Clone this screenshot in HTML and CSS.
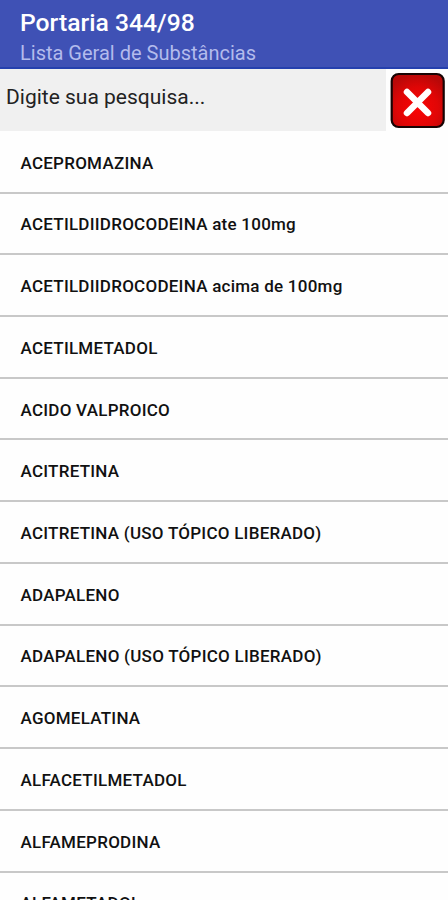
FILE: index.html
```html
<!DOCTYPE html>
<html lang="pt-BR">
<head>
  <meta charset="UTF-8" />
  <meta name="viewport" content="width=device-width, initial-scale=1.0"/>
  <title>Portaria 344/98</title>
  <link rel="stylesheet" href="styles.css">
</head>
<body>
  <header class="app-bar">
    <h1>Portaria 344/98</h1>
    <p>Lista Geral de Substâncias</p>
  </header>

  <div class="search">
    <div class="search-input">Digite sua pesquisa...</div>
    <button class="clear-button" aria-label="Limpar">
      <svg width="56" height="57" viewBox="0 0 56 57">
        <defs>
          <radialGradient id="red" cx="50%" cy="65%" r="65%">
            <stop offset="0" stop-color="#fa0505"/>
            <stop offset="0.6" stop-color="#e00606"/>
            <stop offset="1" stop-color="#b90808"/>
          </radialGradient>
        </defs>
        <rect x="1.7" y="2" width="52" height="53" rx="7" fill="url(#red)" stroke="#180404" stroke-width="2.2"/>
        <path d="M17 20L38 41M38 20L17 41" stroke="#fff" stroke-width="6.500" stroke-linecap="round"/>
      </svg>
    </button>
  </div>

  <ul class="list">
    <li>ACEPROMAZINA</li>
    <li>ACETILDIIDROCODEINA ate 100mg</li>
    <li>ACETILDIIDROCODEINA acima de 100mg</li>
    <li>ACETILMETADOL</li>
    <li>ACIDO VALPROICO</li>
    <li>ACITRETINA</li>
    <li>ACITRETINA (USO TÓPICO LIBERADO)</li>
    <li>ADAPALENO</li>
    <li>ADAPALENO (USO TÓPICO LIBERADO)</li>
    <li>AGOMELATINA</li>
    <li>ALFACETILMETADOL</li>
    <li>ALFAMEPRODINA</li>
    <li>ALFAMETADOL</li>
  </ul>
</body>
</html>
```
FILE: styles.css
```css
* {
  box-sizing: border-box;
}

body {
  font-family: Roboto, "Liberation Sans", sans-serif;
  margin: 0;
  height: 100vh;
  display: flex;
  flex-direction: column;
  overflow: hidden;
  background-color: #fefefe;
  color: #111;
}

.app-bar {
  flex: none;
  height: 69px;
  padding: 8px 20px 0;
  background-color: #3f51b5;
  border-bottom: 2px solid #2540ae;
}

.app-bar h1 {
  margin: 0;
  font-size: 24.7px;
  line-height: 30px;
  font-weight: 500;
  color: #fff;
}

.app-bar p {
  margin: 3px 0 0;
  font-size: 20px;
  line-height: 24px;
  color: #b3bbec;
}

.search {
  flex: none;
  display: flex;
  height: 62px;
}

.search-input {
  width: 386px;
  padding: 15px 6px 0;
  background-color: #f0f0f0;
  font-size: 21px;
  line-height: 26px;
  color: #222;
}

.clear-button {
  width: 62px;
  padding: 3px 0 0 4px;
  border: none;
  background: none;
  display: flex;
  align-items: flex-start;
}

.list {
  list-style: none;
  margin: 0;
  padding: 0.9px 0 0;
}

.list li {
  height: 61.73px;
  padding: 18.8px 20.5px 0;
  border-bottom: 2px solid #c8c8c8;
  font-size: 17px;
  line-height: 24px;
  letter-spacing: 0.25px;
  font-weight: 500;
  white-space: nowrap;
}
```
